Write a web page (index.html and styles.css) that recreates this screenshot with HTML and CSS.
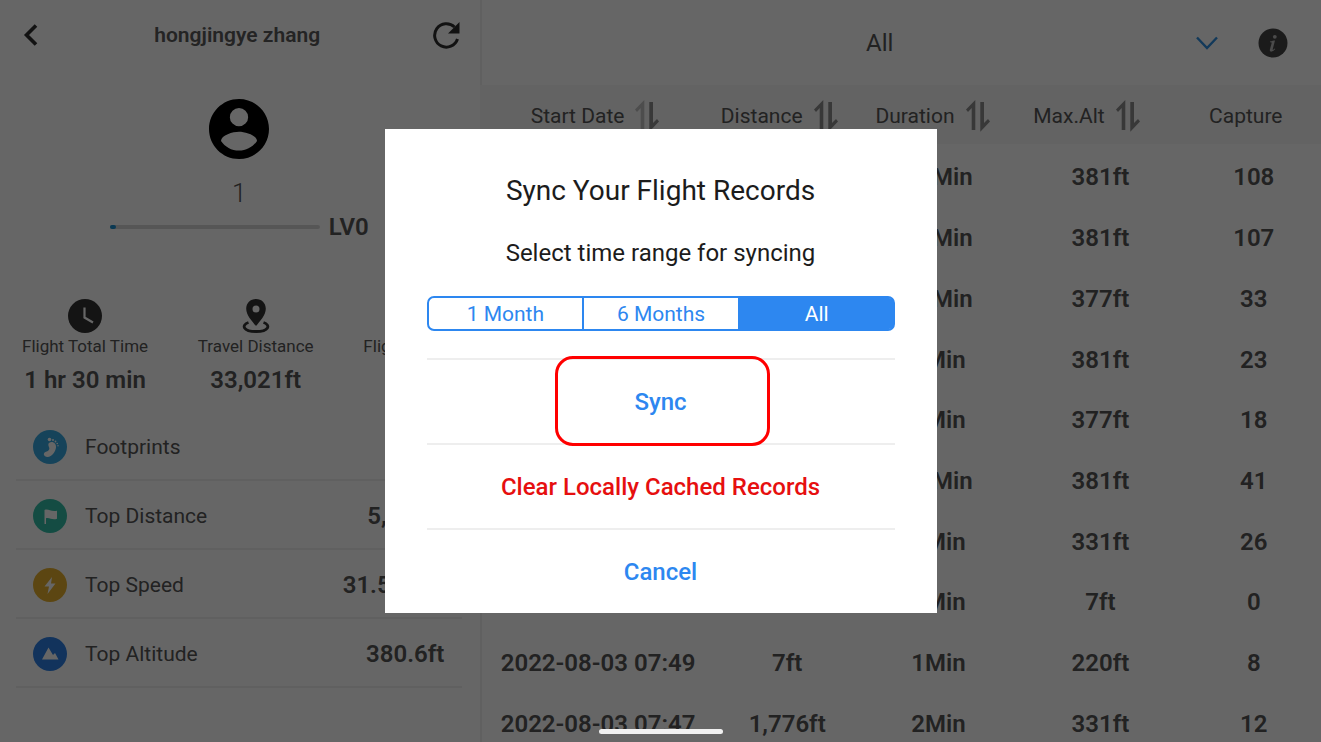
FILE: index.html
```html
<!DOCTYPE html>
<html lang="en">

<head>
  <meta charset="UTF-8" />
  <meta name="viewport" content="width=device-width, initial-scale=1.0" />
  <title>Flight Records</title>
  <link rel="stylesheet" href="styles.css">
</head>

<body>
  <div class="app">
    <!-- Pilot profile -->
    <aside class="profile">
      <header class="profile-bar">
        <button class="icon-button" aria-label="Back">
          <svg width="24" height="24" viewBox="0 0 24 24"><path d="M18 2.500 8.500 12 18 21.500" fill="none" stroke="#2f2f2f" stroke-width="3.600" /></svg>
        </button>
        <h1>hongjingye zhang</h1>
        <button class="icon-button" aria-label="Refresh">
          <svg width="28" height="28" viewBox="0 0 28 28">
            <path d="M22.500 6A11.700 11.700 0 1 0 25.500 18" fill="none" stroke="#2f2f2f" stroke-width="3" />
            <path d="M27.500 1V12.500H16z" fill="#2f2f2f" />
          </svg>
        </button>
      </header>

      <div class="pilot">
        <svg width="60" height="60" viewBox="2 2 20 20"><path d="M12 2C6.480 2 2 6.480 2 12s4.480 10 10 10 10-4.480 10-10S17.520 2 12 2zm0 3a3 3 0 1 1 0 6.100A3 3 0 0 1 12 5zm0 14.200c-2.500 0-4.710-1.280-6-3.220.03-1.990 4-3.080 6-3.080s5.970 1.090 6 3.080c-1.290 1.940-3.500 3.220-6 3.220z" /></svg>
        <span class="pilot-count">1</span>
        <div class="level">
          <div class="level-track"><div class="level-fill"></div></div>
          <strong>LV0</strong>
        </div>
      </div>

      <div class="stats">
        <div class="stat">
          <svg width="34" height="34" viewBox="0 0 34 34">
            <circle cx="17" cy="17" r="17" fill="#333" />
            <path d="M16.500 8.500v10l8.500 5" fill="none" stroke="#fff" stroke-width="2.200" />
          </svg>
          <span>Flight Total Time</span>
          <strong>1 hr 30 min</strong>
        </div>
        <div class="stat">
          <svg width="34" height="34" viewBox="0 0 34 34">
            <path d="M17 0C11.300 0 7.200 4.200 7.200 9.700 7.200 16 13 22 17 27c4-5 9.800-11 9.800-17.300C26.800 4.200 22.700 0 17 0zm0 6.500a3.500 3.500 0 1 1 0 7 3.500 3.500 0 0 1 0-7z" fill="#333" />
            <path d="M9.500 23.500C2 26 4 32.500 17 32.500S32 26 24.500 23.500" fill="none" stroke="#333" stroke-width="2.800" />
          </svg>
          <span>Travel Distance</span>
          <strong>33,021ft</strong>
        </div>
        <div class="stat">
          <svg width="34" height="34" viewBox="0 0 34 34"><circle cx="17" cy="17" r="17" fill="#333" /></svg>
          <span>Flight Times</span>
          <strong>27</strong>
        </div>
      </div>

      <ul class="records">
        <li>
          <svg width="34" height="34" viewBox="0 0 34 34">
            <circle cx="17" cy="17" r="17" fill="#38a9e0" />
            <g fill="#fff">
              <path d="M16 13c3-2.500 7.500 0 7 4.500-.5 4-4 9.500-8.500 9.500-4 0-5-4-1.500-5.200 3-.8 4-2.800 3-4.800-.7-1.500-1-3 0-4z" />
              <circle cx="16.500" cy="9.500" r="1.800" /><circle cx="20" cy="10" r="1" /><circle cx="22.500" cy="11.500" r=".9" /><circle cx="24.200" cy="13.500" r=".8" /><circle cx="25" cy="15.800" r=".7" />
            </g>
          </svg>
          <span>Footprints</span>
        </li>
        <li>
          <svg width="34" height="34" viewBox="0 0 34 34">
            <circle cx="17" cy="17" r="17" fill="#32bfa7" />
            <path d="M11.500 11c4-1.500 6 2 12.500.8v8c-5 1.800-7-1.500-11-.6V25h-1.500z" fill="#fff" />
          </svg>
          <span>Top Distance</span>
          <strong>5,206ft</strong>
        </li>
        <li>
          <svg width="34" height="34" viewBox="0 0 34 34">
            <circle cx="17" cy="17" r="17" fill="#e6b02d" />
            <path d="M19 9 11.500 18.500H16L14.500 26 22.500 15.500H18z" fill="#fff" />
          </svg>
          <span>Top Speed</span>
          <strong>31.5 mph</strong>
        </li>
        <li>
          <svg width="34" height="34" viewBox="0 0 34 34">
            <circle cx="17" cy="17" r="17" fill="#2d80e6" />
            <path d="M9 22.500 15.500 10.500 20 18l2-2 3.500 6.500z" fill="#fff" />
          </svg>
          <span>Top Altitude</span>
          <strong>380.6ft</strong>
        </li>
      </ul>
    </aside>

    <!-- Flight log -->
    <main class="log">
      <div class="log-bar">
        <div class="filter">
          <select aria-label="Aircraft">
            <option>All</option>
          </select>
          <svg class="filter-arrow" width="22" height="14" viewBox="0 0 22 14"><path d="M1 1.500 11 12 21 1.500" fill="none" stroke="#2f8fe0" stroke-width="2.400" /></svg>
        </div>
        <button class="icon-button" aria-label="Information">
          <svg width="30" height="30" viewBox="0 0 30 30">
            <circle cx="15" cy="15" r="14.500" fill="#444" />
            <circle cx="16.800" cy="8.800" r="1.900" fill="#bbb" />
            <path d="M12 13.500c2-.5 3.500-1 5-1l-2.300 8.800c-.2.900.5.800 2-.8l.6.600c-2.500 3.200-6.200 3.400-5.400.4l1.700-6.300c.2-.8-.4-.9-1.600-.9z" fill="#bbb" />
          </svg>
        </button>
      </div>

      <table>
        <thead>
          <tr>
            <th class="col-date">
              <button>Start Date <svg width="24" height="32" viewBox="0 0 24 32"><path class="dim" d="M9.300 0v30H5.700V8L2 12 0 9.600z" /><path d="M14.300 2H18v21l4-4 2 2.500-9.700 10.200z" /></svg></button>
            </th>
            <th class="col-distance">
              <button>Distance <svg width="24" height="32" viewBox="0 0 24 32"><path d="M9.300 0v30H5.700V8L2 12 0 9.600zM14.300 2H18v21l4-4 2 2.500-9.700 10.200z" /></svg></button>
            </th>
            <th class="col-duration">
              <button>Duration <svg width="24" height="32" viewBox="0 0 24 32"><path d="M9.300 0v30H5.700V8L2 12 0 9.600zM14.300 2H18v21l4-4 2 2.500-9.700 10.200z" /></svg></button>
            </th>
            <th class="col-altitude">
              <button>Max.Alt <svg width="24" height="32" viewBox="0 0 24 32"><path d="M9.300 0v30H5.700V8L2 12 0 9.600zM14.300 2H18v21l4-4 2 2.500-9.700 10.200z" /></svg></button>
            </th>
            <th class="col-capture">Capture</th>
          </tr>
        </thead>
        <tbody>
          <tr><td></td><td></td><td>10Min</td><td>381ft</td><td>108</td></tr>
          <tr><td></td><td></td><td>10Min</td><td>381ft</td><td>107</td></tr>
          <tr><td></td><td></td><td>10Min</td><td>377ft</td><td>33</td></tr>
          <tr><td></td><td></td><td>1Min</td><td>381ft</td><td>23</td></tr>
          <tr><td></td><td></td><td>1Min</td><td>377ft</td><td>18</td></tr>
          <tr><td></td><td></td><td>10Min</td><td>381ft</td><td>41</td></tr>
          <tr><td></td><td></td><td>1Min</td><td>331ft</td><td>26</td></tr>
          <tr><td></td><td></td><td>1Min</td><td>7ft</td><td>0</td></tr>
          <tr><td>2022-08-03 07:49</td><td>7ft</td><td>1Min</td><td>220ft</td><td>8</td></tr>
          <tr><td>2022-08-03 07:47</td><td>1,776ft</td><td>2Min</td><td>331ft</td><td>12</td></tr>
        </tbody>
      </table>
    </main>
  </div>

  <!-- Sync dialog -->
  <div class="overlay">
    <div class="dialog" role="dialog" aria-modal="true" aria-labelledby="sync-title">
      <h2 id="sync-title">Sync Your Flight Records</h2>
      <p id="range-label">Select time range for syncing</p>
      <div class="segments" role="radiogroup" aria-labelledby="range-label">
        <input type="radio" name="range" id="range-1"><label for="range-1">1 Month</label>
        <input type="radio" name="range" id="range-6"><label for="range-6">6 Months</label>
        <input type="radio" name="range" id="range-all" checked><label for="range-all">All</label>
      </div>
      <button class="action highlighted">Sync</button>
      <button class="action danger">Clear Locally Cached Records</button>
      <button class="action">Cancel</button>
    </div>
  </div>
  <div class="home-bar"></div>
</body>

</html>
```
FILE: styles.css
```css
* {
  box-sizing: border-box;
}

body {
  margin: 0;
  font-family: Roboto, 'Liberation Sans', sans-serif;
  color: #555;
  background: #fff;
}

button,
select {
  font: inherit;
  color: inherit;
  background: none;
  border: none;
  padding: 0;
  cursor: pointer;
}

svg {
  display: block;
  flex: none;
}

strong {
  font-weight: 600;
}

.app {
  display: grid;
  grid-template-columns: 4fr 7fr;
  height: 100vh;
  overflow: hidden;
}

/* Left side */
.profile {
  padding: 0 18px 0 16px;
  border-right: 2px solid #f0f0f0;
  margin-right: -2px;
}

.profile-bar {
  display: flex;
  align-items: center;
  justify-content: space-between;
  height: 70px;
}

.profile-bar h1 {
  margin: 0;
  font-size: 21px;
  font-weight: 600;
  color: #5a5a5a;
}

.icon-button {
  display: flex;
  flex: none;
  padding: 2px;
}

.pilot {
  display: flex;
  flex-direction: column;
  align-items: center;
  padding-top: 29px;
}

.pilot-count {
  margin-top: 18px;
  font-size: 26px;
  font-weight: 300;
  line-height: 32px;
}

.level {
  display: flex;
  align-items: center;
  gap: 9px;
  margin-top: 4px;
  font-size: 24px;
  line-height: 28px;
}

.level-track {
  width: 210px;
  height: 4px;
  border-radius: 2px;
  background: #d8d8d8;
}

.level-fill {
  width: 6px;
  height: 4px;
  border-radius: 2px;
  background: #1a8fd0;
}

.stats {
  display: flex;
  justify-content: space-between;
  padding: 0 6px;
  margin-top: 58px;
}

.stat {
  display: flex;
  flex-direction: column;
  align-items: center;
}

.stat span {
  margin-top: 1px;
  font-size: 17px;
  line-height: 24px;
}

.stat strong {
  margin-top: 7px;
  font-size: 24px;
  line-height: 30px;
}

.records {
  list-style: none;
  margin: 17px 0 0;
  padding: 0;
}

.records li {
  display: flex;
  align-items: center;
  height: 69px;
  padding: 2px 18px 0 17px;
  border-bottom: 2px solid #f0f0f0;
  font-size: 21px;
}

.records span {
  flex: 1;
  margin-left: 18px;
}

.records strong {
  font-size: 24px;
}

/* Right side */
.log-bar {
  display: flex;
  align-items: center;
  height: 85px;
  padding: 0 31px 0 40px;
}

.filter {
  position: relative;
  flex: 1;
  margin-right: 17px;
}

.filter select {
  width: 100%;
  appearance: none;
  text-align: center;
  font-size: 24px;
}

.filter-arrow {
  position: absolute;
  right: 21px;
  top: 7px;
  pointer-events: none;
}

table {
  width: 100%;
  height: 669px;
  table-layout: fixed;
  border-collapse: collapse;
  text-align: center;
}

thead {
  background: #f7f7f7;
  border-bottom: 2px solid #fff;
}

th {
  height: 60px;
  padding: 2px 12px 0 0;
  font-size: 21px;
  font-weight: 400;
}

th button {
  display: inline-flex;
  align-items: center;
  gap: 11px;
}

th svg {
  fill: #8c8c8c;
}

th .dim {
  fill: #c0c0c0;
}

td {
  padding: 0;
  font-size: 24px;
  font-weight: 600;
}

td:nth-child(4) {
  padding-right: 4px;
}

.col-date {
  width: 28%;
  padding-right: 6px;
}

.col-distance {
  width: 17%;
  padding-right: 16px;
}

.col-duration {
  width: 19%;
}

.col-altitude {
  width: 20%;
  padding-right: 32px;
}

.col-capture {
  padding-right: 16px;
}

/* Dialog */
.overlay {
  position: fixed;
  inset: 0;
  display: flex;
  align-items: center;
  justify-content: center;
  background: rgba(0, 0, 0, 0.6);
}

.dialog {
  width: 552px;
  max-width: 100%;
  padding: 44px 42px 0;
  background: #fff;
  color: #1c1c1c;
  text-align: center;
}

.dialog h2 {
  margin: 0 0 26px;
  font-size: 28px;
  font-weight: 400;
  line-height: 36px;
}

.dialog p {
  margin: 0 0 25px;
  font-size: 24px;
  line-height: 36px;
}

.segments {
  display: flex;
  height: 35px;
  margin-bottom: 27px;
  border: 2px solid #2d87f0;
  border-radius: 7px;
  font-size: 21px;
  line-height: 32px;
  color: #2d87f0;
}

.segments input {
  position: absolute;
  opacity: 0;
}

.segments label {
  flex: 1;
  cursor: pointer;
}

.segments label + input + label {
  border-left: 2px solid #2d87f0;
}

.segments input:checked + label {
  background: #2d87f0;
  color: #fff;
}

.segments label:last-child {
  margin-right: -1px;
  border-radius: 0 5px 5px 0;
}

.action {
  position: relative;
  display: block;
  width: 100%;
  height: 85px;
  border-top: 2px solid #eee;
  font-size: 24px;
  font-weight: 500;
  color: #2d87f0;
}

.danger {
  color: #e60f0f;
}

/* Red frame round the main action */
.highlighted {
  z-index: 1;
}

.highlighted::after {
  content: '';
  position: absolute;
  top: -4px;
  bottom: -3px;
  left: 128px;
  right: 125px;
  border: 3px solid #f00;
  border-radius: 18px;
}

.home-bar {
  position: fixed;
  bottom: 8px;
  left: 50%;
  width: 124px;
  height: 5px;
  margin-left: -62px;
  border-radius: 3px;
  background: #f0f0f0;
}
```
